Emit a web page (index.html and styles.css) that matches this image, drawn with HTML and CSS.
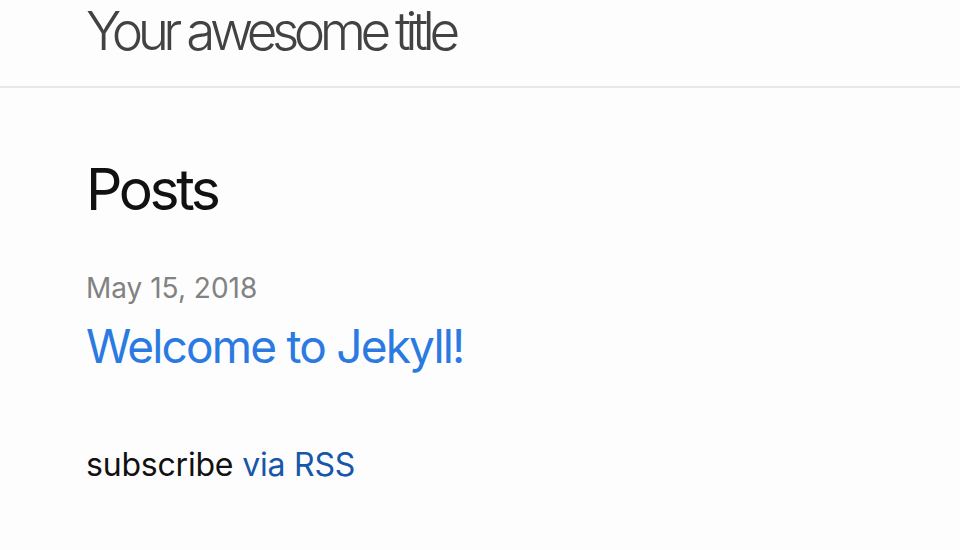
FILE: index.html
```html
<!DOCTYPE html>
<html lang="en">
<head>
<meta charset="utf-8">
<title>Your awesome title</title>
<link rel="stylesheet" href="styles.css">
</head>
<body>
<header class="site-header">
  <div class="wrapper">
    <a class="site-title" href="#">Your awesome title</a>
  </div>
</header>
<main class="page-content">
  <div class="wrapper">
    <h2 class="post-list-heading">Posts</h2>
    <ul class="post-list">
      <li>
        <span class="post-meta">May 15, 2018</span>
        <h3 class="post-title"><a class="post-link" href="#">Welcome to Jekyll!</a></h3>
      </li>
    </ul>
    <p class="rss-subscribe">subscribe <a href="#">via RSS</a></p>
  </div>
</main>
</body>
</html>
```
FILE: styles.css
```css
html, body {
  margin: 0;
  padding: 0;
}
body {
  background: #fdfdfd;
  color: #111111;
  font-family: Inter, "Noto Sans", sans-serif;
}
.wrapper {
  padding: 0 86px;
}
.site-header {
  height: 86px;
  border-bottom: 2px solid #e8e8e8;
}
.site-title {
  display: block;
  padding-top: 2px;
  font-size: 53px;
  line-height: 58px;
  font-weight: 300;
  letter-spacing: -5.5px;
  color: #424242;
  text-decoration: none;
}
.post-list-heading {
  margin: 70px 0 0;
  font-size: 57px;
  line-height: 64px;
  font-weight: 400;
  letter-spacing: -3.4px;
}
.post-list {
  list-style: none;
  margin: 49px 0 0;
  padding: 0;
}
.post-meta {
  display: block;
  font-size: 28px;
  line-height: 34px;
  color: #828282;
}
.post-title {
  margin: 15px 0 0;
  font-size: 46px;
  line-height: 52px;
  font-weight: 400;
  letter-spacing: -1.8px;
}
.post-link {
  color: #2a7ae2;
  text-decoration: none;
}
.rss-subscribe {
  margin: 73px 0 0;
  font-size: 32px;
  line-height: 40px;
  letter-spacing: -0.2px;
}
.rss-subscribe a {
  color: #1756a9;
  text-decoration: none;
}
```
